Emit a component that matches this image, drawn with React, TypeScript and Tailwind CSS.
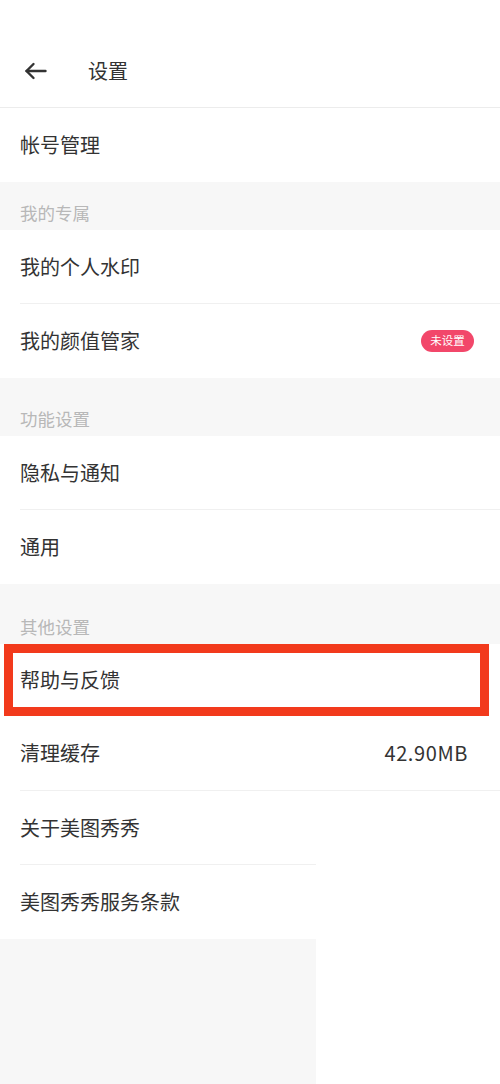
import { ReactNode } from "react"

const font = { fontFamily: '"Noto Sans CJK SC", "Noto Sans", sans-serif' }

function Row({ label, right, divider = true }: { label: string; right?: ReactNode; divider?: boolean }) {
  return (
    <div className="bg-white pl-5">
      <div className={`h-[74px] flex items-center justify-between pr-[26px] ${divider ? "border-b border-[#f0f0f0]" : ""}`}>
        <span className="text-[20px] text-[#333333]">{label}</span>
        {right}
      </div>
    </div>
  )
}

function GroupTitle({ title, height }: { title: string; height: string }) {
  return (
    <div className={`bg-[#f7f7f7] px-5 flex items-end pb-[4px] ${height}`}>
      <span className="text-[17.5px] text-[#b8b8b8]">{title}</span>
    </div>
  )
}

export default function App() {
  return (
    <div className="w-[500px] h-[1084px] bg-white overflow-hidden" style={font}>
      {/* Header */}
      <div className="h-[108px] flex items-center pt-[34px] border-b border-[#ececec]">
        <svg className="ml-[24px]" width="23" height="18" viewBox="0 0 23 18" fill="none" stroke="#333" strokeWidth="2.4" strokeLinecap="round" strokeLinejoin="round">
          <path d="M21.5 9H2.5" />
          <path d="M9.5 2L2.5 9L9.5 16" />
        </svg>
        <span className="ml-[41px] text-[20px] text-[#333333]">设置</span>
      </div>

      <Row label="帐号管理" divider={false} />

      <GroupTitle title="我的专属" height="h-[48px]" />
      <Row label="我的个人水印" />
      <Row
        label="我的颜值管家"
        divider={false}
        right={
          <span className="h-[22px] w-[53px] rounded-full bg-[#f2476a] text-white text-[11.5px] flex items-center justify-center">
            未设置
          </span>
        }
      />

      <GroupTitle title="功能设置" height="h-[58px]" />
      <Row label="隐私与通知" />
      <Row label="通用" divider={false} />

      <GroupTitle title="其他设置" height="h-[60px]" />

      {/* highlighted row */}
      <div className="bg-white h-[72px] pl-[4px] pr-[11px]">
        <div className="h-full border-[9px] border-[#f23a1c] flex items-center pl-[7px]">
          <span className="text-[20px] text-[#333333]">帮助与反馈</span>
        </div>
      </div>

      <div className="bg-white pl-5">
        <div className="h-[75px] flex items-center justify-between pr-[32px] border-b border-[#f0f0f0]">
          <span className="text-[20px] text-[#333333]">清理缓存</span>
          <span className="text-[20px] tracking-[0.6px] text-[#333333]">42.90MB</span>
        </div>
      </div>

      <div className="w-[316px]">
        <Row label="关于美图秀秀" />
        <Row label="美图秀秀服务条款" divider={false} />
        <div className="bg-[#f7f7f7] h-[150px]" />
      </div>
    </div>
  )
}
